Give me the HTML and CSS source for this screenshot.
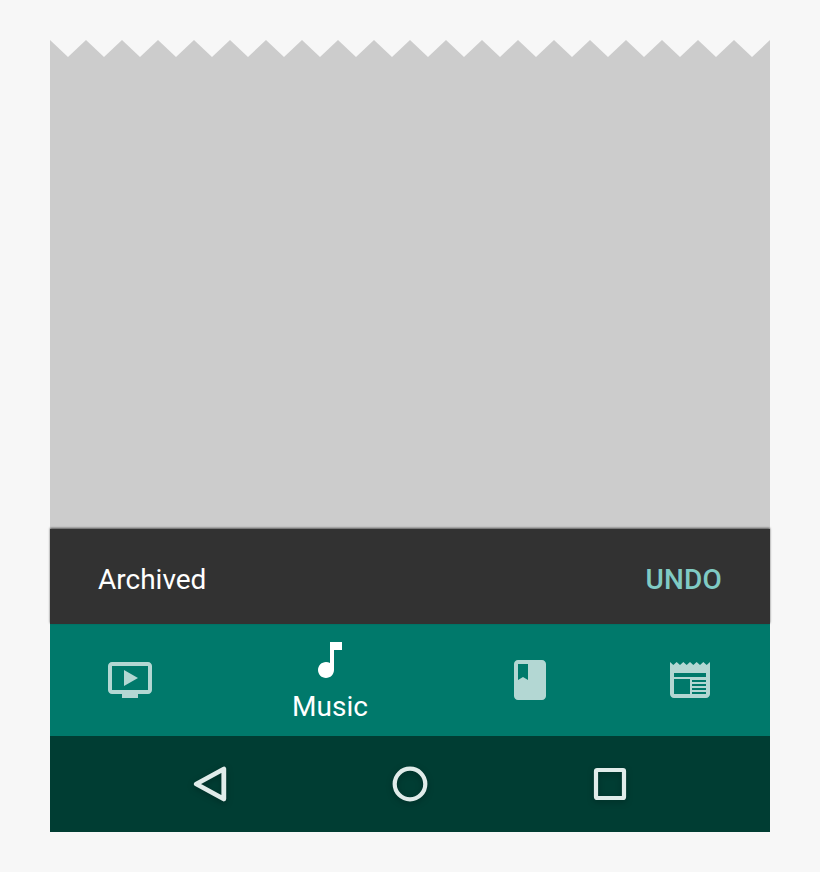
FILE: index.html
```html
<!DOCTYPE html>
<html lang="en">
<head>
<meta charset="utf-8">
<title>Archived</title>
<link rel="stylesheet" href="styles.css">
</head>
<body>
<main class="phone">
  <section class="paper">
    <svg class="zigzag" viewBox="0 0 720 18" width="720" height="18" aria-hidden="true">
      <polygon points="0,0 18,17 36,0 54,17 72,0 90,17 108,0 126,17 144,0 162,17 180,0 198,17 216,0 234,17 252,0 270,17 288,0 306,17 324,0 342,17 360,0 378,17 396,0 414,17 432,0 450,17 468,0 486,17 504,0 522,17 540,0 558,17 576,0 594,17 612,0 630,17 648,0 666,17 684,0 702,17 720,0 720,18 0,18"/>
    </svg>
    <div class="paper-body"></div>
  </section>
  <section class="snackbar">
    <span class="snack-text">Archived</span>
    <span class="snack-action">UNDO</span>
  </section>
  <nav class="tabs">
    <div class="tab">
      <svg class="icon dim" viewBox="0 0 24 24"><path d="M21 3H3c-1.1 0-2 .9-2 2v12c0 1.1.9 2 2 2h5v2h8v-2h5c1.1 0 1.99-.9 1.99-2L23 5c0-1.1-.9-2-2-2zm0 14H3V5h18v12zM16 11l-7 4V7z"/></svg>
    </div>
    <div class="tab tab-active">
      <svg class="icon" viewBox="0 0 24 24"><path d="M12 3v10.55c-.59-.34-1.27-.55-2-.55-2.21 0-4 1.79-4 4s1.79 4 4 4 4-1.79 4-4V7h4V3h-6z"/></svg>
      <span class="tab-label">Music</span>
    </div>
    <div class="tab">
      <svg class="icon dim" viewBox="0 0 24 24"><path d="M18 2H6c-1.1 0-2 .9-2 2v16c0 1.1.9 2 2 2h12c1.1 0 2-.9 2-2V4c0-1.1-.9-2-2-2zM6 4h5v8l-2.5-1.5L6 12V4z"/></svg>
    </div>
    <div class="tab">
      <svg class="icon dim" viewBox="0 0 48 48"><path fill-rule="evenodd" d="M4 6l3.330 3 3.340-3 3.330 3 3.330-3 3.340 3L24 6l3.330 3 3.340-3 3.330 3 3.330-3 3.340 3L44 6V38c0 2.200-1.800 4-4 4H8c-2.200 0-4-1.800-4-4zM8 17v4h32v-4zM8 23v15h16V23zM26 24v2h14v-2zM26 28v2h14v-2zM26 32v2h14v-2zM26 36v2h14v-2z"/></svg>
    </div>
  </nav>
  <nav class="sysbar">
    <svg class="sys sys-back" viewBox="0 0 48 48"><path d="M37.800 9V39L10.300 24z"/></svg>
    <svg class="sys" viewBox="0 0 48 48"><circle cx="24" cy="24" r="15.300"/></svg>
    <svg class="sys" viewBox="0 0 48 48"><rect x="10" y="10" width="28" height="28" rx="1"/></svg>
  </nav>
</main>
</body>
</html>
```
FILE: styles.css
```css
* { box-sizing: border-box; }
html, body { margin: 0; }
body {
  background: #f7f7f7;
  padding: 40px 50px;
  font-family: Roboto, "Noto Sans", sans-serif;
}
.phone {
  display: flex;
  flex-direction: column;
  width: 720px;
  height: 792px;
}
.paper {
  display: flex;
  flex-direction: column;
  height: 489px;
}
.zigzag {
  display: block;
  flex: none;
  fill: #cccccc;
}
.paper-body {
  flex: 1;
  background: #cccccc;
}
.snackbar {
  position: relative;
  display: flex;
  align-items: center;
  justify-content: space-between;
  height: 95px;
  padding: 6px 48px 0;
  background: #323232;
  box-shadow: 0 -1px 2px rgba(0, 0, 0, .6);
  font-size: 28px;
  line-height: 32px;
}
.snack-text { color: #ffffff; }
.snack-action {
  color: #80cbc4;
  font-weight: 500;
  letter-spacing: .2px;
}
.tabs {
  display: grid;
  grid-template-columns: 160px 240px 160px 160px;
  height: 112px;
  background: #00796b;
}
.tab {
  display: flex;
  align-items: center;
  justify-content: center;
}
.tab-active {
  flex-direction: column;
  justify-content: flex-start;
  padding-top: 12px;
}
.icon {
  display: block;
  flex: none;
  width: 48px;
  height: 48px;
  fill: #ffffff;
}
.dim { opacity: .7; }
.tab-label {
  margin-top: 7px;
  color: #ffffff;
  font-size: 28px;
  line-height: 32px;
}
.sysbar {
  display: grid;
  grid-template-columns: repeat(3, 200px);
  justify-content: center;
  justify-items: center;
  align-items: center;
  height: 96px;
  background: #003d33;
}
.sys {
  display: block;
  width: 48px;
  height: 48px;
  fill: none;
  stroke: #e0ecea;
  stroke-width: 4.200;
  stroke-linejoin: round;
  filter: drop-shadow(0 2px 3px rgba(0, 0, 0, .25));
}
.sys-back { stroke-width: 4.800; }
```
